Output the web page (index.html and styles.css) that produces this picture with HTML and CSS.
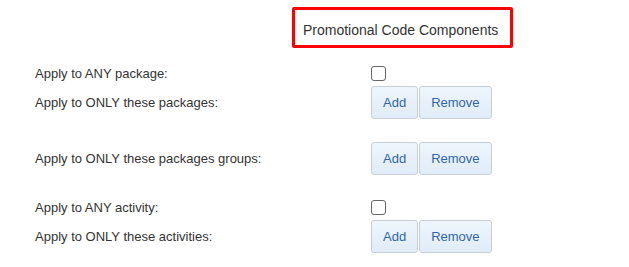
FILE: index.html
```html
<!DOCTYPE html>
<html>
<head>
<meta charset="utf-8">
<link rel="stylesheet" href="styles.css">
</head>
<body>
<div class="page">
  <div class="title-wrap"><div class="title">Promotional Code Components</div></div>
  <div class="form">
    <div class="row r-check1">
      <div class="label">Apply to ANY package:</div>
      <div class="ctrl"><input type="checkbox" class="cb"></div>
    </div>
    <div class="row r-btn1">
      <div class="label">Apply to ONLY these packages:</div>
      <div class="ctrl"><button class="btn">Add</button><button class="btn">Remove</button></div>
    </div>
    <div class="row r-btn2">
      <div class="label">Apply to ONLY these packages groups:</div>
      <div class="ctrl"><button class="btn">Add</button><button class="btn">Remove</button></div>
    </div>
    <div class="row r-check2">
      <div class="label">Apply to ANY activity:</div>
      <div class="ctrl"><input type="checkbox" class="cb"></div>
    </div>
    <div class="row r-btn3">
      <div class="label">Apply to ONLY these activities:</div>
      <div class="ctrl"><button class="btn">Add</button><button class="btn">Remove</button></div>
    </div>
  </div>
</div>
</body>
</html>
```

FILE: styles.css
```css
html, body {
  margin: 0;
  padding: 0;
  background: #fff;
}
body {
  font-family: "Liberation Sans", Arial, sans-serif;
  color: #333;
}
.page {
  padding-top: 7px;
}
.title-wrap {
  display: flex;
  padding-left: 292px;
}
.title {
  width: 207px;
  height: 35px;
  border: 3px solid #ff0000;
  border-radius: 2px;
  font-size: 14px;
  line-height: 16px;
  padding: 12px 0 0 8px;
  box-sizing: border-box;
  height: 41px;
  width: 221px;
  color: #333;
}
.form {
  padding-left: 35px;
  margin-top: 18px;
}
.row {
  display: grid;
  grid-template-columns: 336px auto;
  align-items: center;
  font-size: 13px;
}
.r-btn1 { margin-top: 5px; }
.r-btn2 { margin-top: 23px; }
.r-check2 { margin-top: 25px; }
.r-btn3 { margin-top: 5px; }
.ctrl {
  display: flex;
  gap: 1px;
}
.cb {
  appearance: none;
  -webkit-appearance: none;
  width: 15px;
  height: 15px;
  margin: 0;
  border: 1px solid #666;
  border-radius: 3px;
  background: #fff;
  box-sizing: border-box;
}
.btn {
  height: 33px;
  padding: 0 11px;
  margin: 0;
  border: 1px solid #c8ced6;
  border-radius: 3px;
  background: linear-gradient(#eef5fc, #e0ecf8);
  color: #2f67a3;
  font-family: "Liberation Sans", Arial, sans-serif;
  font-size: 13px;
  box-sizing: border-box;
}
```
